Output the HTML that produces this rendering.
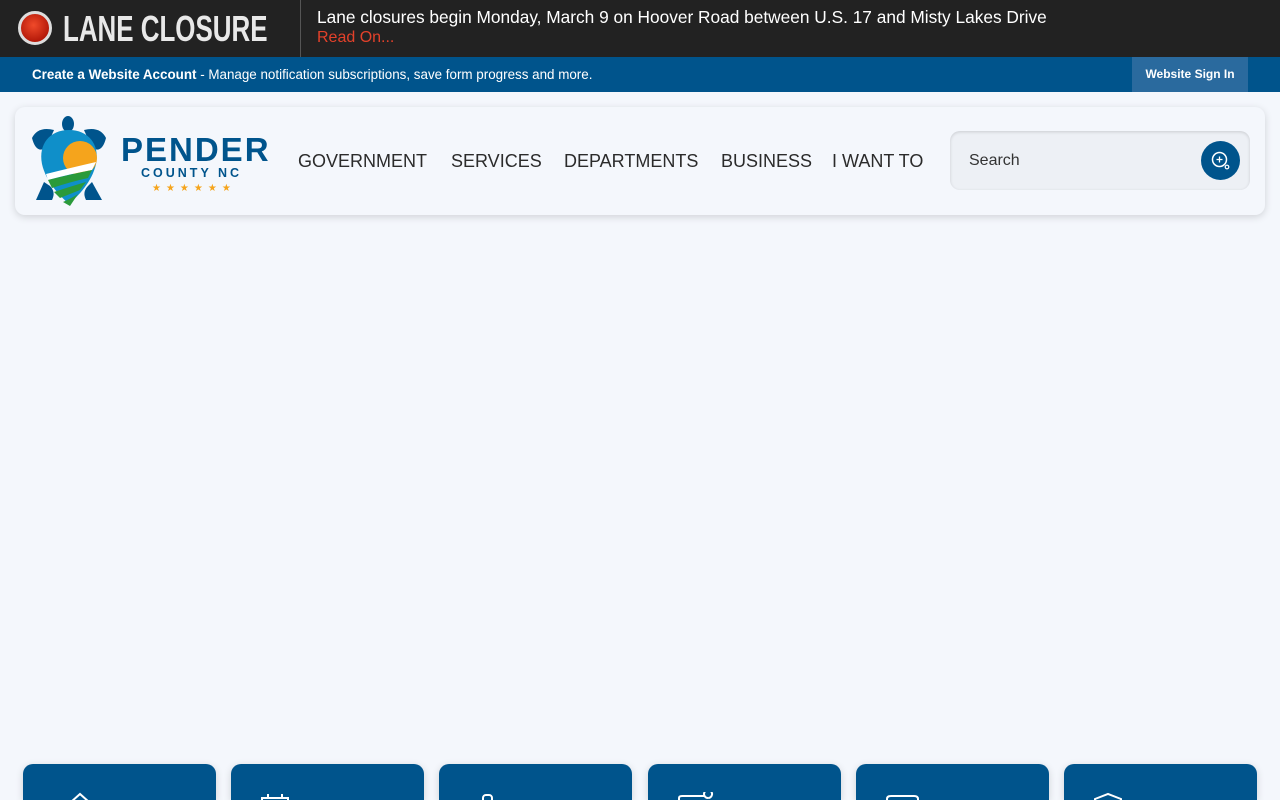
<!DOCTYPE html>
<html><head><meta charset="utf-8"><style>
*{margin:0;padding:0;box-sizing:border-box}
html,body{width:1280px;height:800px;overflow:hidden}
body{background:#f4f7fc;font-family:"Liberation Sans",sans-serif;position:relative}
.alert{position:absolute;left:0;top:0;width:1280px;height:57px;background:#222}
.dot{position:absolute;left:18px;top:11px;width:34px;height:34px;border-radius:50%;background:radial-gradient(circle at 45% 40%,#f04a2a,#b51a0a 70%);border:3px solid #ddd}
.lc{position:absolute;left:63px;top:8px;color:#e8e8e8;font-weight:bold;font-size:36px;transform:scaleX(0.72);transform-origin:0 0;white-space:nowrap}
.sep{position:absolute;left:300px;top:0;width:1px;height:57px;background:#555}
.msg{position:absolute;left:317px;top:7px;color:#fff;font-size:17.3px;white-space:nowrap}
.ro{position:absolute;left:317px;top:29px;color:#e3412a;font-size:16px}
.bar{position:absolute;left:0;top:57px;width:1280px;height:35px;background:#00548c}
.bar .t{position:absolute;left:32px;top:10px;color:#fff;font-size:13.4px;white-space:nowrap}
.sign{position:absolute;left:1132px;top:0;width:116px;height:35px;background:#2a6a9e;color:#fff;font-size:12px;text-align:center;line-height:35px;font-weight:bold}
.hdr{position:absolute;left:15px;top:107px;width:1250px;height:108px;background:#f4f7fc;border-radius:10px;box-shadow:0 2px 8px rgba(0,0,0,.15)}
.nav{position:absolute;top:151px;color:#2b2b2b;font-size:18px;white-space:nowrap}
.search{position:absolute;left:950px;top:131px;width:300px;height:59px;background:#edf0f5;border-radius:10px;box-shadow:inset 0 1px 3px rgba(0,0,0,.15)}
.search span{position:absolute;left:19px;top:21px;font-size:16px;color:#333}
.sb{position:absolute;left:251px;top:10px;width:39px;height:39px;border-radius:50%;background:#00548c}
.card{position:absolute;top:764px;width:193px;height:36px;background:#00548c;border-radius:10px 10px 0 0;box-shadow:0 2px 8px rgba(0,0,0,.15)}
</style></head><body>
<div class="alert"><div class="dot"></div><div class="lc">LANE CLOSURE</div><div class="sep"></div>
<div class="msg">Lane closures begin Monday, March 9 on Hoover Road between U.S. 17 and Misty Lakes Drive</div>
<div class="ro">Read On...</div></div>
<div class="bar"><div class="t"><b>Create a Website Account</b> - Manage notification subscriptions, save form progress and more.</div><div class="sign">Website Sign In</div></div>
<div class="hdr"></div>
<svg style="position:absolute;left:30px;top:116px" width="78" height="92" viewBox="0 0 78 92">
<ellipse cx="38" cy="8" rx="6" ry="8" fill="#00548c"/>
<path d="M2 22 Q8 10 24 14 L16 32 Q6 38 2 22Z" fill="#00548c"/>
<path d="M76 22 Q70 10 54 14 L62 32 Q72 38 76 22Z" fill="#00548c"/>
<path d="M14 66 L6 84 L22 84 Q26 76 20 70Z" fill="#00548c"/>
<path d="M62 66 L72 84 L56 84 Q52 76 58 70Z" fill="#00548c"/>
<path d="M39 14 C58 14 70 28 66 48 C62 66 48 80 39 88 C30 80 16 66 12 48 C8 28 20 14 39 14Z" fill="#0f8fc9"/>
<path d="M39 14 C58 14 70 28 66 48 C62 66 48 80 39 88 C30 80 16 66 12 48 C8 28 20 14 39 14Z" fill="none" stroke="#00548c" stroke-width="0"/>
<circle cx="50" cy="42" r="17" fill="#f5a41c"/>
<path d="M16 58 Q40 52 66 46 L62 54 Q40 58 18 64Z" fill="#fff"/>
<path d="M18 64 Q42 58 62 54 L58 62 Q40 66 22 72Z" fill="#2a9a3a"/>
<path d="M24 76 Q42 70 56 66 L50 74 Q40 78 30 82Z" fill="#2a9a3a"/>
<path d="M33 86 Q42 82 48 78 L40 90Z" fill="#2a9a3a"/>
</svg>
<div style="position:absolute;left:121px;top:131px;color:#00548c;font-weight:bold;font-size:33px;letter-spacing:2px">PENDER</div>
<div style="position:absolute;left:141px;top:166px;color:#00548c;font-weight:bold;font-size:12.5px;letter-spacing:3px">COUNTY NC</div>
<div style="position:absolute;left:152px;top:183px;color:#f5a41c;font-size:10px;letter-spacing:5px">★★★★★★</div>
<div class="nav" style="left:298px">GOVERNMENT</div>
<div class="nav" style="left:451px">SERVICES</div>
<div class="nav" style="left:564px">DEPARTMENTS</div>
<div class="nav" style="left:721px">BUSINESS</div>
<div class="nav" style="left:832px">I WANT TO</div>
<div class="search"><span>Search</span><div class="sb"><svg width="39" height="39" viewBox="0 0 39 39"><circle cx="18.5" cy="18.5" r="7" fill="none" stroke="#fff" stroke-width="1.5"/><path d="M18.5 15.5v6M15.5 18.5h6" stroke="#fff" stroke-width="1.3"/><circle cx="26" cy="26" r="1.8" fill="none" stroke="#fff" stroke-width="1.2"/></svg></div></div>
<div class="card" style="left:23px"><svg style="position:absolute;left:42px;top:28px" width="30" height="10"><path d="M6 10 L15 2 L24 10" fill="none" stroke="#fff" stroke-width="2"/></svg></div>
<div class="card" style="left:231px"><svg style="position:absolute;left:27px;top:28px" width="36" height="10"><path d="M4 10 V6 H30 V10 M10 2V7 M24 2V7" fill="none" stroke="#fff" stroke-width="2"/></svg></div>
<div class="card" style="left:439px"><svg style="position:absolute;left:40px;top:28px" width="20" height="10"><rect x="4" y="3" width="9" height="10" rx="3" fill="none" stroke="#fff" stroke-width="2"/></svg></div>
<div class="card" style="left:648px"><svg style="position:absolute;left:28px;top:28px" width="40" height="10"><path d="M3 10 V6 Q3 4 6 4 H28 M32 6 a4 4 0 1 1 0.1 0" fill="none" stroke="#fff" stroke-width="2"/></svg></div>
<div class="card" style="left:856px"><svg style="position:absolute;left:28px;top:28px" width="40" height="10"><path d="M3 10 V7 Q3 4 7 4 H30 Q34 4 34 7 V10" fill="none" stroke="#fff" stroke-width="2"/></svg></div>
<div class="card" style="left:1064px"><svg style="position:absolute;left:28px;top:28px" width="40" height="10"><path d="M3 10 V7 L16 2 L29 7 V10" fill="none" stroke="#fff" stroke-width="2"/></svg></div>
</body></html>
